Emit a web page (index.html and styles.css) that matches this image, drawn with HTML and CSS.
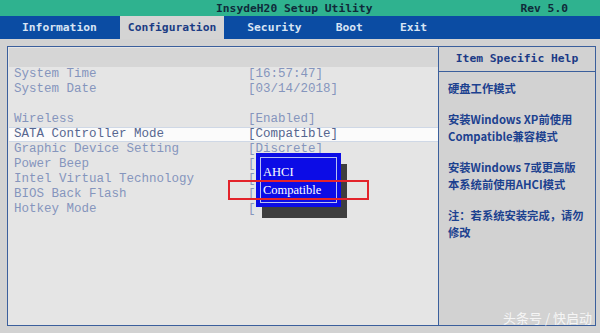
FILE: index.html
```html
<!DOCTYPE html>
<html lang="zh-CN">
<head>
    <meta charset="UTF-8">
    <meta name="viewport" content="width=device-width, initial-scale=1.0">
    <title>InsydeH20 Setup Utility</title>
    <link rel="stylesheet" href="styles.css">
</head>
<body>

    <!-- Title Bar -->
    <header class="titlebar">
        <span class="title">InsydeH20 Setup Utility</span>
        <span class="rev">Rev 5.0</span>
    </header>

    <!-- Menu Tabs -->
    <nav class="menu">
        <span class="tab">Information</span>
        <span class="tab active">Configuration</span>
        <span class="tab">Security</span>
        <span class="tab tab-boot">Boot</span>
        <span class="tab tab-exit">Exit</span>
    </nav>

    <!-- Main Area -->
    <div class="main">
        <div class="panel">
            <section class="settings">
                <div class="settings-head"></div>
                <ul class="rows">
                    <li class="row"><span class="label">System Time</span><span class="value">[16:57:47]</span></li>
                    <li class="row"><span class="label">System Date</span><span class="value">[03/14/2018]</span></li>
                    <li class="row spacer"></li>
                    <li class="row"><span class="label">Wireless</span><span class="value">[Enabled]</span></li>
                    <li class="row selected"><span class="label">SATA Controller Mode</span><span class="value">[Compatible]</span></li>
                    <li class="row"><span class="label">Graphic Device Setting</span><span class="value">[Discrete]</span></li>
                    <li class="row"><span class="label">Power Beep</span><span class="value">[</span></li>
                    <li class="row"><span class="label">Intel Virtual Technology</span><span class="value">[</span></li>
                    <li class="row"><span class="label">BIOS Back Flash</span><span class="value">[</span></li>
                    <li class="row"><span class="label">Hotkey Mode</span><span class="value">[</span></li>
                </ul>
            </section>

            <aside class="help">
                <h2 class="help-head">Item Specific Help</h2>
                <div class="help-body">
                    <p>硬盘工作模式</p>
                    <p>安装Windows XP前使用<br>Compatible兼容模式</p>
                    <p>安装Windows 7或更高版<br>本系统前使用AHCI模式</p>
                    <p>注：若系统安装完成，请勿<br>修改</p>
                </div>
            </aside>
        </div>

        <!-- Option Popup -->
        <div class="popup">
            <div class="popup-inner">
                <div class="option">AHCI</div>
                <div class="option">Compatible</div>
            </div>
        </div>

        <!-- Annotation -->
        <div class="mark"></div>

        <div class="watermark">头条号 / 快启动</div>
    </div>

</body>
</html>
```

FILE: styles.css
```css
/* Basic Styles */
* {
    box-sizing: border-box;
}

body {
    margin: 0;
    width: 600px;
    height: 333px;
    overflow: hidden;
    background-color: #d2d2d2;
    font-family: "Liberation Mono", monospace;
}

/* Title Bar */
.titlebar {
    height: 16px;
    background-color: #2fb28f;
    display: flex;
    align-items: center;
    padding: 0 32px 0 216px;
    font-family: "DejaVu Sans Mono", monospace;
    font-weight: bold;
    font-size: 11.3px;
    color: #102a3a;
}

.rev {
    margin-left: auto;
}

/* Menu */
.menu {
    height: 23px;
    background-color: #0b4ca3;
    display: flex;
    align-items: stretch;
    gap: 15px;
    padding-left: 14px;
    font-family: "DejaVu Sans Mono", monospace;
    font-weight: bold;
    font-size: 11.3px;
    color: #d8e4f4;
}

.tab {
    display: flex;
    align-items: center;
    padding: 0 8px;
}

.tab.active {
    background-color: #d4d4d4;
    color: #1b3c84;
}

.tab-boot {
    margin-left: 3px;
}

.tab-exit {
    margin-left: 6px;
}

/* Main Area */
.main {
    position: relative;
    height: 294px;
    padding: 7px 4px 7px 7px;
}

.panel {
    height: 280px;
    display: grid;
    grid-template-columns: 430px 1fr;
    border: 1px solid #3b5f9c;
    box-shadow: inset 1px 1px 0 #f2f6fc;
}

/* Settings List */
.settings {
    background-color: #e5e5e5;
    padding-left: 1px;
}

.settings-head {
    height: 19px;
    background-color: #d6d6d6;
    margin-top: 1px;
}

.rows {
    list-style: none;
    margin: 0;
    padding: 0;
    font-size: 12.5px;
    color: #8595bd;
}

.row {
    display: flex;
    height: 15px;
    line-height: 15px;
    padding-left: 5px;
}

.row.spacer {
    height: 15px;
}

.row.selected {
    background-color: #fbfbfb;
    border-top: 1px solid #cfd8e6;
    border-bottom: 1px solid #cfd8e6;
    line-height: 13px;
    color: #56668f;
}

.label {
    width: 234px;
}

/* Help Panel */
.help {
    border-left: 1px solid #3b5f9c;
    background-color: #d2d2d2;
}

.help-head {
    margin: 0;
    height: 25px;
    line-height: 24px;
    border-bottom: 1px solid #3b5f9c;
    text-align: center;
    font-family: "DejaVu Sans Mono", monospace;
    font-size: 11.3px;
    color: #1a3a86;
}

.help-body {
    padding: 8px 0 0 9px;
    font-family: "Noto Sans CJK SC", sans-serif;
    font-weight: bold;
    font-size: 11.3px;
    line-height: 17px;
    color: #1c418f;
}

.help-body p {
    margin: 0 0 14px;
}

/* Popup */
.popup {
    position: absolute;
    left: 256px;
    top: 114px;
    width: 85px;
    height: 54px;
    background-color: #0c0ce6;
    box-shadow: 6px 11px 0 #3e3e3e;
    padding: 4px;
}

.popup-inner {
    height: 100%;
    border: 1px solid #b8c0f0;
    padding: 5px 0 0 2px;
    font-family: "Liberation Serif", serif;
    font-size: 12.5px;
    line-height: 18px;
    color: #ffffff;
}

/* Annotation */
.mark {
    position: absolute;
    left: 228px;
    top: 141px;
    width: 141px;
    height: 20px;
    border: 2px solid #e3232b;
}

.watermark {
    position: absolute;
    right: 8px;
    bottom: 6px;
    font-family: "Noto Sans CJK SC", sans-serif;
    font-size: 13px;
    color: rgba(255, 255, 255, 0.8);
}
```
